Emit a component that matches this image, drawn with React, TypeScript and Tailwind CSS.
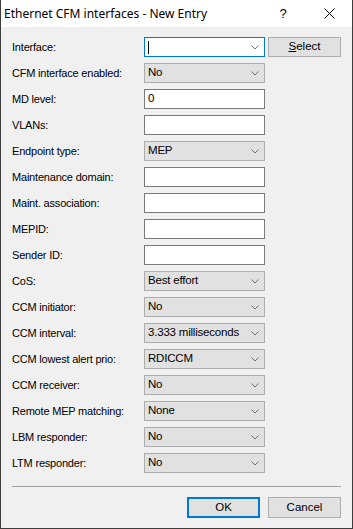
import React from 'react'

type Row = { label: string; kind: 'text' | 'select' | 'combo'; value?: string }

const rows: Row[] = [
  { label: 'Interface:', kind: 'combo', value: '' },
  { label: 'CFM interface enabled:', kind: 'select', value: 'No' },
  { label: 'MD level:', kind: 'text', value: '0' },
  { label: 'VLANs:', kind: 'text' },
  { label: 'Endpoint type:', kind: 'select', value: 'MEP' },
  { label: 'Maintenance domain:', kind: 'text' },
  { label: 'Maint. association:', kind: 'text' },
  { label: 'MEPID:', kind: 'text' },
  { label: 'Sender ID:', kind: 'text' },
  { label: 'CoS:', kind: 'select', value: 'Best effort' },
  { label: 'CCM initiator:', kind: 'select', value: 'No' },
  { label: 'CCM interval:', kind: 'select', value: '3.333 milliseconds' },
  { label: 'CCM lowest alert prio:', kind: 'select', value: 'RDICCM' },
  { label: 'CCM receiver:', kind: 'select', value: 'No' },
  { label: 'Remote MEP matching:', kind: 'select', value: 'None' },
  { label: 'LBM responder:', kind: 'select', value: 'No' },
  { label: 'LTM responder:', kind: 'select', value: 'No' },
]

function Chevron() {
  return (
    <svg width="8" height="5" viewBox="0 0 8 5" className="shrink-0">
      <path d="M0.5 0.5 L4 4 L7.5 0.5" fill="none" stroke="#707070" strokeWidth="1" />
    </svg>
  )
}

function Field({ row }: { row: Row }) {
  if (row.kind === 'text') {
    return (
      <div className="w-[121px] h-[20px] bg-white border border-[#7a7a7a] flex items-center pl-[3px] text-[11.5px] text-black">
        {row.value}
      </div>
    )
  }
  if (row.kind === 'combo') {
    return (
      <div className="w-[121px] h-[20px] bg-white border border-[#0078d7] flex items-center pl-[3px] pr-[5px]">
        <div className="w-px h-[13px] bg-black" />
        <div className="flex-1" />
        <Chevron />
      </div>
    )
  }
  return (
    <div className="w-[121px] h-[20px] bg-[#e1e1e1] border border-[#adadad] flex items-center pl-[3px] pr-[5px] text-[11.5px] tracking-[-0.2px] text-black">
      <span className="flex-1 whitespace-nowrap overflow-hidden">{row.value}</span>
      <Chevron />
    </div>
  )
}

export default function App() {
  return (
    <div
      className="w-[353px] h-[529px] bg-[#f0f0f0] border border-[#3c3c3c] border-t-0 flex flex-col text-black"
      style={{ fontFamily: '"Liberation Sans", Arial, sans-serif' }}
    >
      {/* title bar */}
      <div className="h-[27px] bg-white flex items-center shrink-0">
        <span className="pl-[3px] text-[12px] flex-1" style={{ fontFamily: '"Noto Sans", sans-serif' }}>
          Ethernet CFM interfaces - New Entry
        </span>
        <span className="w-[46px] text-center text-[13px]">?</span>
        <span className="w-[46px] flex justify-center">
          <svg width="11" height="11" viewBox="0 0 11 11">
            <path d="M0.5 0.5 L10.5 10.5 M10.5 0.5 L0.5 10.5" stroke="#000" strokeWidth="1" />
          </svg>
        </span>
      </div>

      {/* form */}
      <div className="flex flex-col gap-[6px] pt-[10px] pl-[11px]">
        {rows.map((row) => (
          <div key={row.label} className="flex items-center h-[20px]">
            <span className="w-[132px] text-[11px] leading-none tracking-[-0.2px]">{row.label}</span>
            <Field row={row} />
            {row.kind === 'combo' && (
              <button className="ml-[3px] w-[73px] h-[20px] bg-[#e1e1e1] border border-[#adadad] text-[11.5px]">
                <span className="underline">S</span>elect
              </button>
            )}
          </div>
        ))}
      </div>

      {/* separator + buttons */}
      <div className="mx-[11px] mt-[13px] h-px bg-[#a0a0a0]" />
      <div className="flex justify-end gap-[8px] pr-[11px] mt-[10px]">
        <button className="w-[73px] h-[21px] bg-[#e1e1e1] border-2 border-[#0078d7] text-[11.5px]">OK</button>
        <button className="w-[73px] h-[21px] bg-[#e1e1e1] border border-[#adadad] text-[11.5px]">Cancel</button>
      </div>
    </div>
  )
}
